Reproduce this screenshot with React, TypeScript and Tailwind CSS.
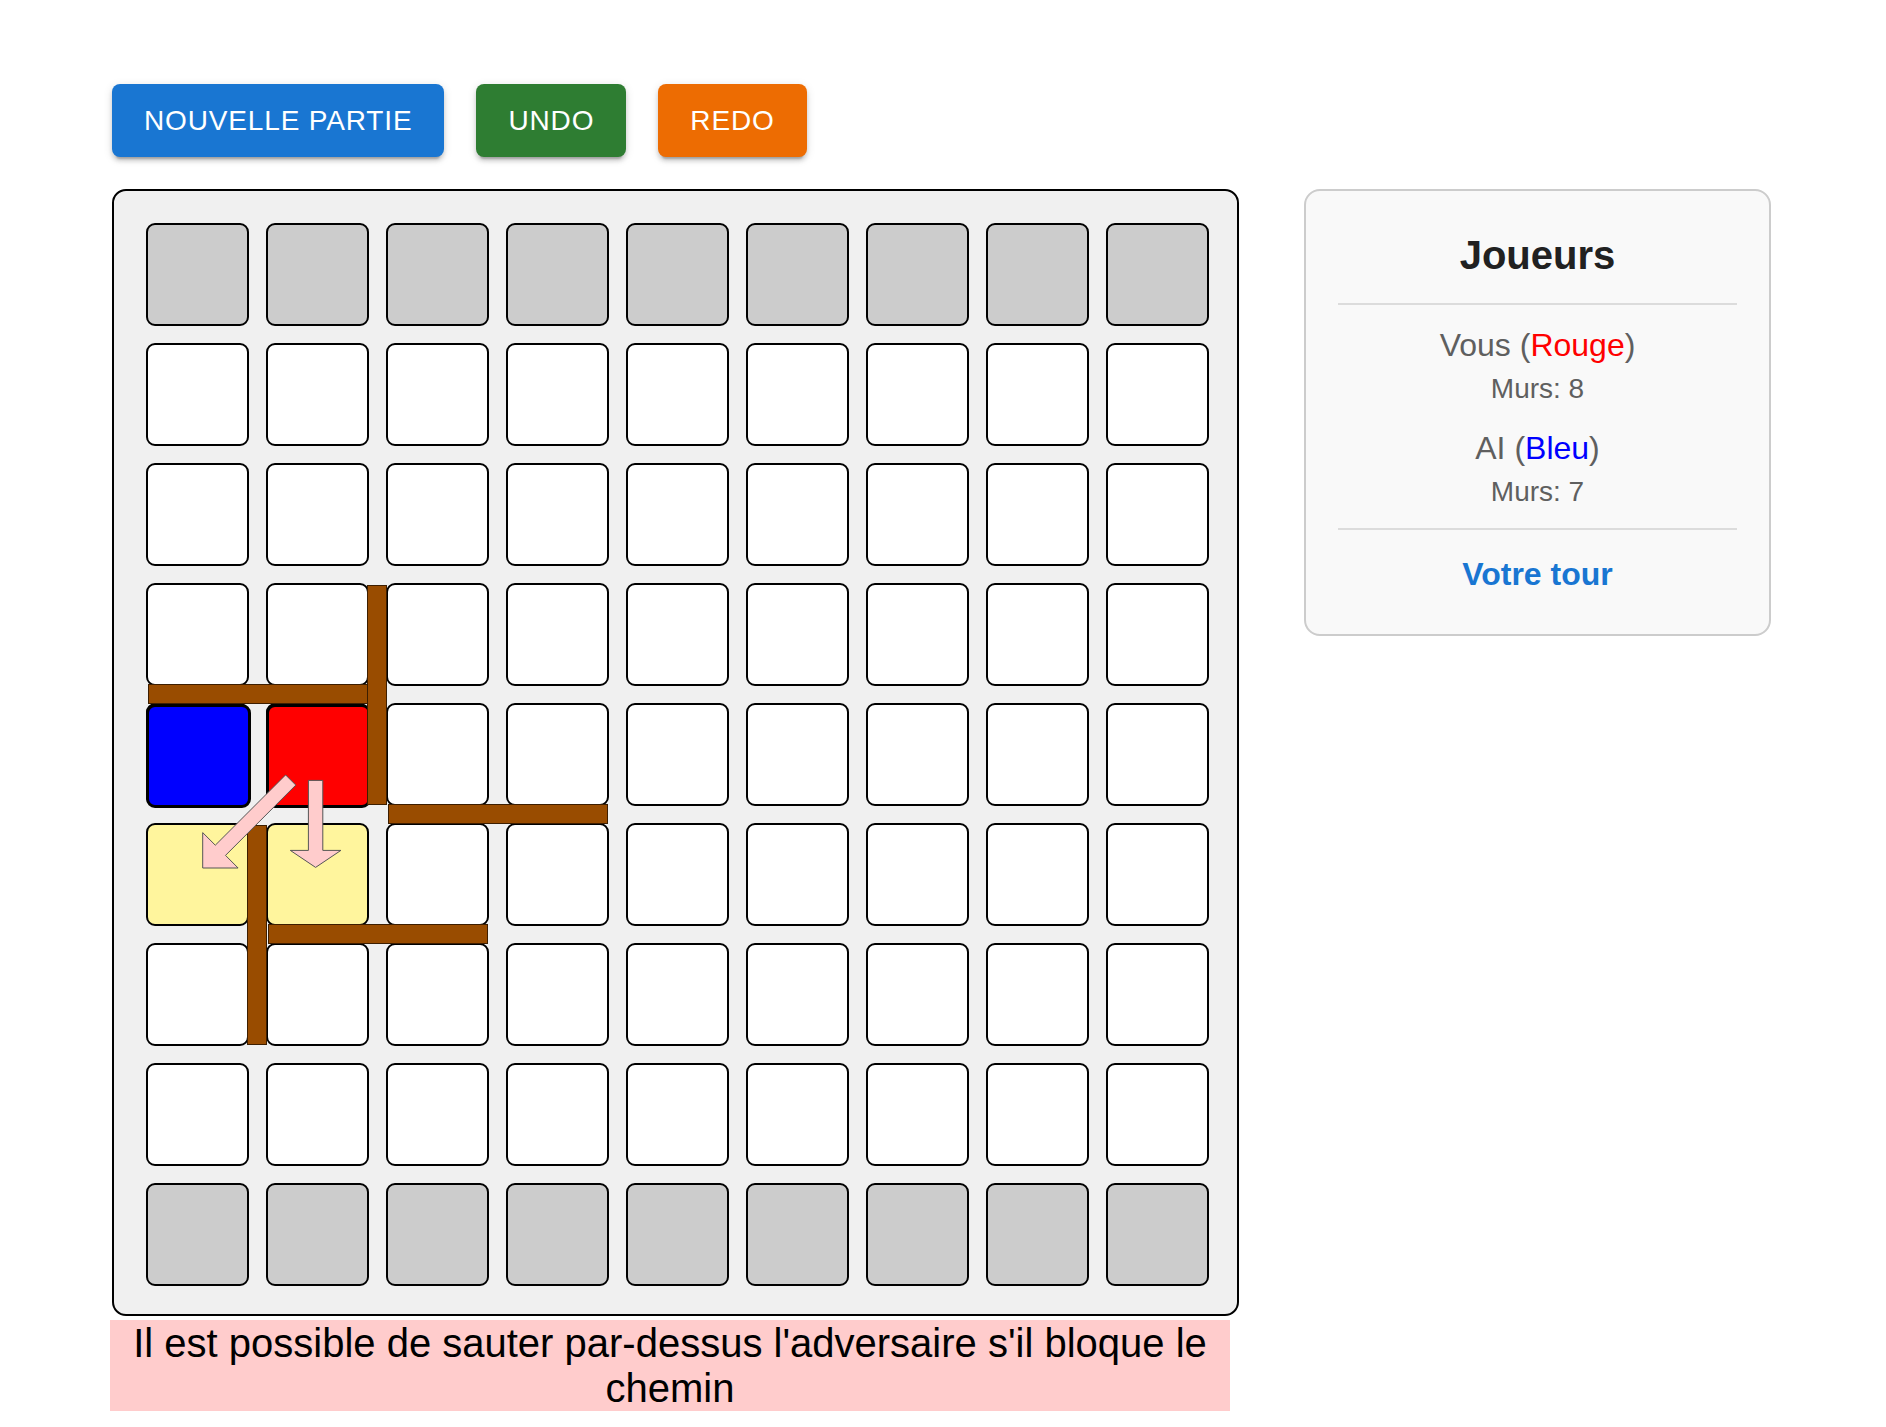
import React from "react";

const SIZE = 9;
const PITCH = 120; // cell 103 + gap 17

type Wall = { dir: "h" | "v"; row: number; col: number };

const walls: Wall[] = [
  { dir: "h", row: 4, col: 0 },
  { dir: "h", row: 5, col: 2 },
  { dir: "h", row: 6, col: 1 },
  { dir: "v", row: 3, col: 2 },
  { dir: "v", row: 5, col: 1 },
];

const pawns: Record<string, string> = {
  "4-0": "bg-[#0000ff]",
  "4-1": "bg-[#ff0000]",
};

const highlighted = new Set(["5-0", "5-1"]);

const Cell = ({ row, col }: { row: number; col: number }) => {
  const key = `${row}-${col}`;
  const goal = row === 0 || row === SIZE - 1;
  const bg = highlighted.has(key)
    ? "bg-[#fff59d]"
    : goal
      ? "bg-[#cccccc]"
      : "bg-white";
  const pawn = pawns[key];

  return (
    <div
      className={`relative w-[103px] h-[103px] rounded-[9px] border-2 border-black ${bg}`}
    >
      {pawn && (
        <div
          className={`absolute -left-[2px] -top-[1px] -right-[4px] -bottom-[4px] rounded-[9px] border-[3px] border-black ${pawn}`}
        />
      )}
    </div>
  );
};

const WallBar = ({ wall }: { wall: Wall }) => {
  const style =
    wall.dir === "h"
      ? {
          left: wall.col * PITCH + 1.5,
          top: wall.row * PITCH - 19,
          width: 220,
          height: 20,
        }
      : {
          left: wall.col * PITCH - 19,
          top: wall.row * PITCH + 1.5,
          width: 20,
          height: 220,
        };
  return (
    <div
      className="absolute bg-[#994c00] border border-black/60"
      style={style}
    />
  );
};

const Arrows = () => (
  <svg
    className="absolute left-0 top-0 pointer-events-none overflow-visible"
    width={1063}
    height={1063}
    viewBox="0 0 1063 1063"
  >
    {/* saut diagonal */}
    <polygon
      points="149.8,562.1 79.5,632.4 92.1,645 56.7,645 56.7,609.6 69.3,622.2 139.6,551.9"
      fill="#ffcccc"
      stroke="#555"
      strokeWidth={1}
    />
    {/* déplacement vers le bas */}
    <polygon
      points="162.4,557.4 176.8,557.4 176.8,627.4 194.9,627.4 169.6,644.4 144.3,627.4 162.4,627.4"
      fill="#ffcccc"
      stroke="#555"
      strokeWidth={1}
    />
  </svg>
);

const buttons = [
  { label: "Nouvelle partie", color: "bg-[#1976d2]" },
  { label: "Undo", color: "bg-[#2e7d32]" },
  { label: "Redo", color: "bg-[#ed6c02]" },
];

export default function App() {
  return (
    <div className="min-h-screen bg-white pt-[84px] pl-[112px] font-['Liberation_Sans',Arial,sans-serif]">
      {/* Actions */}
      <div className="flex gap-[32px]">
        {buttons.map((b) => (
          <button
            key={b.label}
            className={`${b.color} text-white uppercase text-[28px] leading-[49px] tracking-[0.85px] px-[32px] py-[12px] rounded-[8px] shadow-[0_6px_2px_-4px_rgba(0,0,0,0.2),0_4px_4px_0_rgba(0,0,0,0.14),0_2px_10px_0_rgba(0,0,0,0.12)]`}
          >
            {b.label}
          </button>
        ))}
      </div>

      <div className="mt-[32px] flex items-start gap-[65px]">
        {/* Plateau */}
        <div>
          <div className="w-[1127px] rounded-[14px] border-2 border-black bg-[#f0f0f0] pt-[32px] pl-[32px] pr-[28px] pb-[28px]">
            <div className="relative grid grid-cols-[repeat(9,103px)] grid-rows-[repeat(9,103px)] gap-[17px]">
              {Array.from({ length: SIZE * SIZE }).map((_, i) => (
                <Cell
                  key={i}
                  row={Math.floor(i / SIZE)}
                  col={i % SIZE}
                />
              ))}
              {walls.map((w, i) => (
                <WallBar key={i} wall={w} />
              ))}
              <Arrows />
            </div>
          </div>
          <p className="mt-[4px] -ml-[2px] w-[1120px] bg-[#ffcccc] pt-[1px] text-center text-[40px] leading-[45px] text-black">
            Il est possible de sauter par-dessus l'adversaire s'il bloque le
            chemin
          </p>
        </div>

        {/* Joueurs */}
        <div className="w-[467px] rounded-[16px] border-2 border-[#cccccc] bg-[#f9f9f9] p-[32px] text-center">
          <h2 className="text-[40px] font-bold leading-[64px] text-[#212121]">
            Joueurs
          </h2>
          <div className="mt-[16px] h-[2px] bg-[#dcdcdc]" />
          <div className="mt-[16px] text-[#5f5f5f]">
            <div className="text-[32px] leading-[48px]">
              Vous (<span className="text-[#ff0000]">Rouge</span>)
            </div>
            <div className="text-[28px] leading-[40px]">Murs: 8</div>
          </div>
          <div className="mt-[15px] text-[#5f5f5f]">
            <div className="text-[32px] leading-[48px]">
              AI (<span className="text-[#0000ff]">Bleu</span>)
            </div>
            <div className="text-[28px] leading-[40px]">Murs: 7</div>
          </div>
          <div className="mt-[16px] h-[2px] bg-[#dcdcdc]" />
          <div className="mt-[16px] text-[32px] font-bold leading-[56px] text-[#1976d2]">
            Votre tour
          </div>
        </div>
      </div>
    </div>
  );
}
